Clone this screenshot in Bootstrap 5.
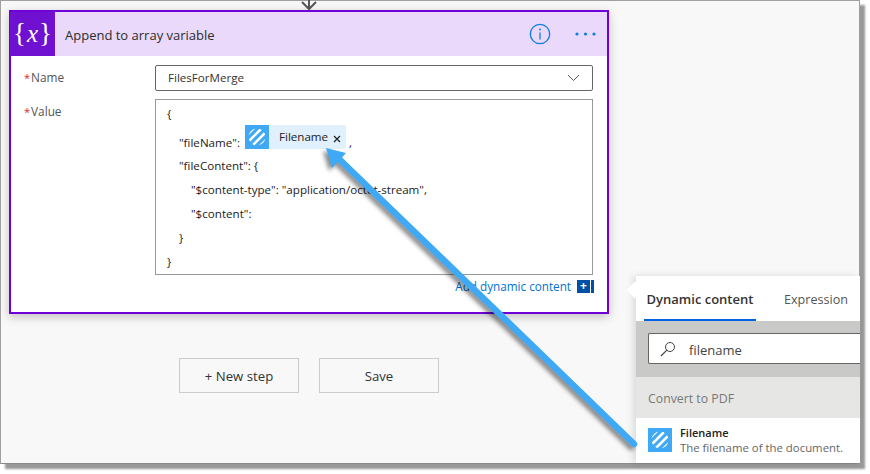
<!DOCTYPE html>
<html lang="en">
<head>
<meta charset="utf-8">
<title>Append to array variable</title>
<link href="https://cdn.jsdelivr.net/npm/bootstrap@5.3.0/dist/css/bootstrap.min.css" rel="stylesheet">
<style>
html,body{margin:0;height:474px;overflow:hidden;background:#fff}
body{font-family:"Open Sans","Noto Sans",sans-serif;font-size:11.6px;color:#333}
.shot{width:860px;height:464px;background:#f8f8f8;border:1px solid #a0a0a0;border-bottom-color:#8a8a8a;box-shadow:5px 5px 2px #999;position:relative;overflow:visible;padding:9px 0 0 8px}
.connector{position:absolute;left:297px;top:-1px}
.flow-card{width:600px;height:304px;border:2px solid #7000d8!important;border-radius:0;box-shadow:0 3px 9px rgba(0,0,0,.22);background:#fff}
.flow-head{height:44px;background:#ead9fb;border:0;border-radius:0!important;padding:0}
.var-icon{width:45px;height:44px;background:#7010d0;color:#fff;font-family:"Liberation Serif",serif;font-size:27px;line-height:42px;margin-left:-1px}
.var-icon i{font-size:25px;margin:0 1px}
.flow-title{font-size:13px;margin-left:10px;padding-top:3px;color:#2c2c2c}
.head-tools{margin-left:auto;padding-right:11px;gap:24px}
.flow-body{padding:9px 14px 0 13px}
.field-label{width:131px;color:#555;font-size:11.8px}
.field-label.val-label{padding-top:4px}
.req{color:#e0242c;margin-right:1px;font-size:11px}
.name-box{width:438px;height:26px;border:1px solid #666;border-radius:2px;padding:0 12px 0 12px;color:#333}
.value-box{width:438px;height:176px;border:1px solid #999;padding:2px 0 0 11px;margin-top:8px;color:#222}
.jline{height:24px;line-height:24px;white-space:nowrap}
.jline.tall{height:28px;line-height:34px;gap:0}
.in1{padding-left:12px}
.in2{padding-left:24px}
.token{width:101px;height:24px;background:#e0f0fd;border-radius:0 2px 2px 0;margin:-1px 3px 0 5px;line-height:24px;color:#222;font-size:11.6px}
.token .tname{margin-left:10px;margin-right:5px}
.add-row{height:22px;width:570px;color:#0072d0;font-size:11.7px;padding-top:1px}
.plus-box{width:13px;height:13px;background:#0050a8;color:#fff;font-size:12px;line-height:12px;text-align:center;font-weight:700;margin-left:6px;border-right:0}
.plus-bar{width:3px;height:13px;background:#0050a8;margin-left:1px;margin-right:0}
.step-row{margin:44px 0 0 170px;gap:20px}
.btn-step{width:120px;height:35px;border:1px solid #ccc;border-radius:0;background:transparent;color:#333;font-size:13.2px;padding:0;line-height:35px}
.dyn-panel{position:absolute;left:635px;top:275px;width:224px;height:187px;background:#fff;box-shadow:-3px 0 7px rgba(0,0,0,.12);overflow:visible}
.notch{position:absolute;left:-7px;top:8px;width:12px;height:12px;background:#fff;transform:rotate(45deg)}
.dyn-tabs{height:45px;padding-left:8px;gap:0;border:0}
.dyn-tab{height:45px;padding:0 3px;line-height:47px;font-size:12.6px;color:#555;border-bottom:2px solid transparent;white-space:nowrap}
.dyn-tab.on{font-size:13px;font-weight:600;color:#333;border-bottom-color:#0062e6;width:112px;text-align:center;padding:0}
.dyn-tab.off{margin-left:25px}
.search-band{height:56px;background:#c9cac8;padding:12px 0 0 12px;position:relative}
.search-box{height:31px;background:#fff;border:1px solid #666;border-right:0;border-radius:2px 0 0 2px;padding-left:11px;font-size:13px;color:#444;gap:13px}
.search-box span{padding-top:5px}
.group-band{height:41px;line-height:44px;background:#e6e7e5;color:#777;padding-left:12px;font-size:12.3px}
.dyn-item{padding:10px 0 0 12px;gap:8px}
.item-name{font-weight:600;font-size:11px;line-height:13px;color:#222;margin-top:-2px}
.item-desc{font-size:11.4px;line-height:18px;color:#666;white-space:nowrap}
.big-arrow{position:absolute;left:0;top:0;pointer-events:none;overflow:visible;filter:drop-shadow(-3px 3px 2px rgba(0,0,0,.45))}
</style>
</head>
<body>
<svg width="0" height="0" class="d-block">
  <defs>
    <clipPath id="dot"><circle cx="12" cy="12" r="8.500"/></clipPath>
    <symbol id="stripe" viewBox="0 0 24 24">
      <rect width="24" height="24" fill="#3fa9f5"/>
      <g clip-path="url(#dot)" stroke="#fff" stroke-width="2.600">
        <path d="M0 12 12 0M2.500 17.500 17.500 2.500M6.500 21.500 21.500 6.500M12 24 24 12"/>
      </g>
    </symbol>
  </defs>
</svg>
<div class="shot">
  <svg class="connector" width="22" height="11" viewBox="0 0 22 11"><path d="M11 0v9M4 2l7 7 7-7" fill="none" stroke="#555" stroke-width="2"/></svg>

  <div class="card flow-card">
    <div class="card-header flow-head d-flex align-items-center">
      <div class="var-icon text-center">{<i>x</i>}</div>
      <div class="flow-title">Append to array variable</div>
      <div class="head-tools d-flex align-items-center">
        <svg width="22" height="22" viewBox="0 0 22 22"><circle cx="11" cy="11" r="9.700" fill="none" stroke="#0f7fe0" stroke-width="1.300"/><path d="M11 9.500v7" stroke="#0f7fe0" stroke-width="1.300"/><circle cx="11" cy="6.500" r="1" fill="#0f7fe0"/></svg>
        <svg width="21" height="4" viewBox="0 0 21 4"><circle cx="2" cy="2" r="1.600" fill="#0f7fe0"/><circle cx="10.500" cy="2" r="1.600" fill="#0f7fe0"/><circle cx="19" cy="2" r="1.600" fill="#0f7fe0"/></svg>
      </div>
    </div>
    <div class="flow-body">
      <div class="d-flex">
        <div class="field-label pt-1"><span class="req">*</span>Name</div>
        <div class="name-box d-flex align-items-center justify-content-between">
          <span>FilesForMerge</span>
          <svg width="13" height="8" viewBox="0 0 13 8"><path d="M1 1l5.500 5.500L12 1" fill="none" stroke="#555" stroke-width="1"/></svg>
        </div>
      </div>
      <div class="d-flex">
        <div class="field-label val-label mt-2"><span class="req">*</span>Value</div>
        <div class="value-box">
          <div class="jline">{</div>
          <div class="jline tall in1 d-flex">
            <span>"fileName":</span>
            <div class="token d-flex align-items-center">
              <svg width="24" height="24"><use href="#stripe"/></svg>
              <span class="tname">Filename</span>
              <svg width="8" height="8" viewBox="0 0 8 8" class="mt-1"><path d="M1 1l6 6M7 1L1 7" stroke="#222" stroke-width="1.200"/></svg>
            </div>
            <span>,</span>
          </div>
          <div class="jline in1">"fileContent": {</div>
          <div class="jline in2">"$content-type": "application/octet-stream",</div>
          <div class="jline in2">"$content":</div>
          <div class="jline in1">}</div>
          <div class="jline">}</div>
        </div>
      </div>
      <div class="add-row d-flex align-items-center justify-content-end">
        <span>Add dynamic content</span>
        <span class="plus-box">+</span><span class="plus-bar"></span>
      </div>
    </div>
  </div>

  <div class="step-row d-flex">
    <button type="button" class="btn btn-step">+ New step</button>
    <button type="button" class="btn btn-step">Save</button>
  </div>

  <div class="dyn-panel">
    <div class="notch"></div>
    <div class="dyn-tabs d-flex">
      <div class="dyn-tab on">Dynamic content</div>
      <div class="dyn-tab off">Expression</div>
    </div>
    <div class="search-band">
      <div class="search-box d-flex align-items-center">
        <svg width="16" height="16" viewBox="0 0 16 16"><circle cx="10" cy="6" r="4.500" fill="none" stroke="#444" stroke-width="1"/><path d="M6.800 9.200 1 15" stroke="#444" stroke-width="1.200"/></svg>
        <span>filename</span>
      </div>
    </div>
    <div class="group-band">Convert to PDF</div>
    <div class="dyn-item d-flex">
      <svg width="24" height="24" class="flex-shrink-0"><use href="#stripe"/></svg>
      <div>
        <div class="item-name">Filename</div>
        <div class="item-desc">The filename of the document.</div>
      </div>
    </div>
  </div>

  <svg class="big-arrow" width="860" height="464" viewBox="0 0 860 464">
    <g transform="translate(-1,-1)">
      <path d="M338 158 634 444" stroke="#3fa9f5" stroke-width="6.500" stroke-linecap="round" fill="none"/>
      <path d="M326 148 346 153 332 168Z" fill="#3fa9f5"/>
    </g>
  </svg>
</div>
<script src="https://cdn.jsdelivr.net/npm/bootstrap@5.3.0/dist/js/bootstrap.bundle.min.js"></script>
</body>
</html>
